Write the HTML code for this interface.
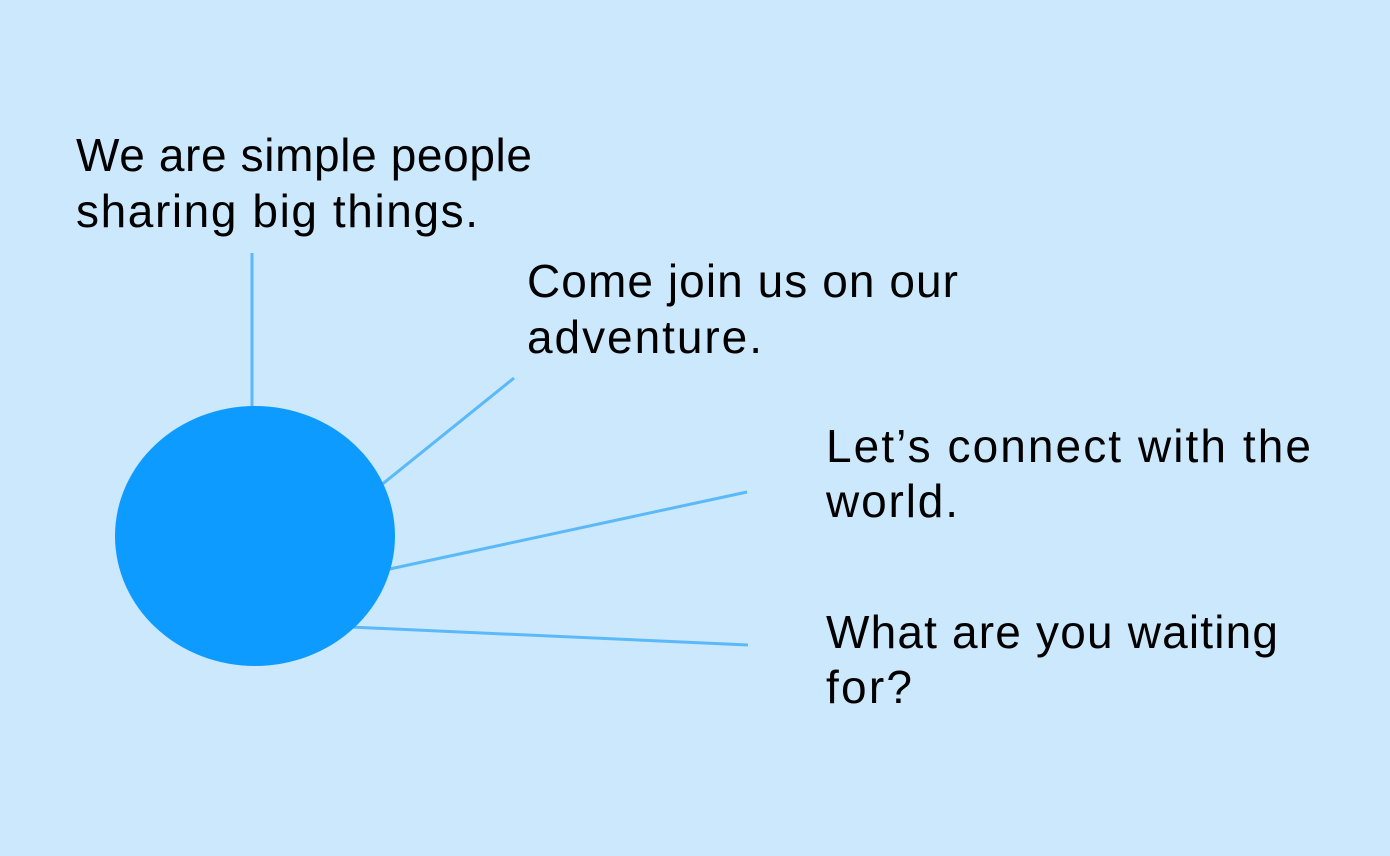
<!DOCTYPE html>
<html><head><style>
html,body{margin:0;padding:0;background:#CCE8FC;}
svg{display:block}
text{font-family:"Liberation Sans",sans-serif;font-size:46px;fill:#000;}
</style></head><body>
<svg width="1390" height="856" viewBox="0 0 1390 856">
<rect width="1390" height="856" fill="#CCE8FC"/>
<g stroke="#5BB9F9" stroke-width="3" fill="none">
<line x1="252" y1="253" x2="252" y2="410"/>
<line x1="380" y1="486" x2="514" y2="378"/>
<line x1="385" y1="570" x2="747" y2="492"/>
<line x1="350" y1="627" x2="748" y2="645"/>
</g>
<ellipse cx="255" cy="536" rx="140" ry="130" fill="#0D9BFF"/>
<text x="76" y="171" textLength="456" lengthAdjust="spacing">We are simple people</text>
<text x="76" y="227" textLength="402" lengthAdjust="spacing">sharing big things.</text>
<text x="527" y="297" textLength="431" lengthAdjust="spacing">Come join us on our</text>
<text x="527" y="353" textLength="235" lengthAdjust="spacing">adventure.</text>
<text x="826" y="462" textLength="485" lengthAdjust="spacing">Let’s connect with the</text>
<text x="826" y="517" textLength="132" lengthAdjust="spacing">world.</text>
<text x="826" y="648" textLength="452" lengthAdjust="spacing">What are you waiting</text>
<text x="826" y="703" textLength="86" lengthAdjust="spacing">for?</text>
</svg>
</body></html>
